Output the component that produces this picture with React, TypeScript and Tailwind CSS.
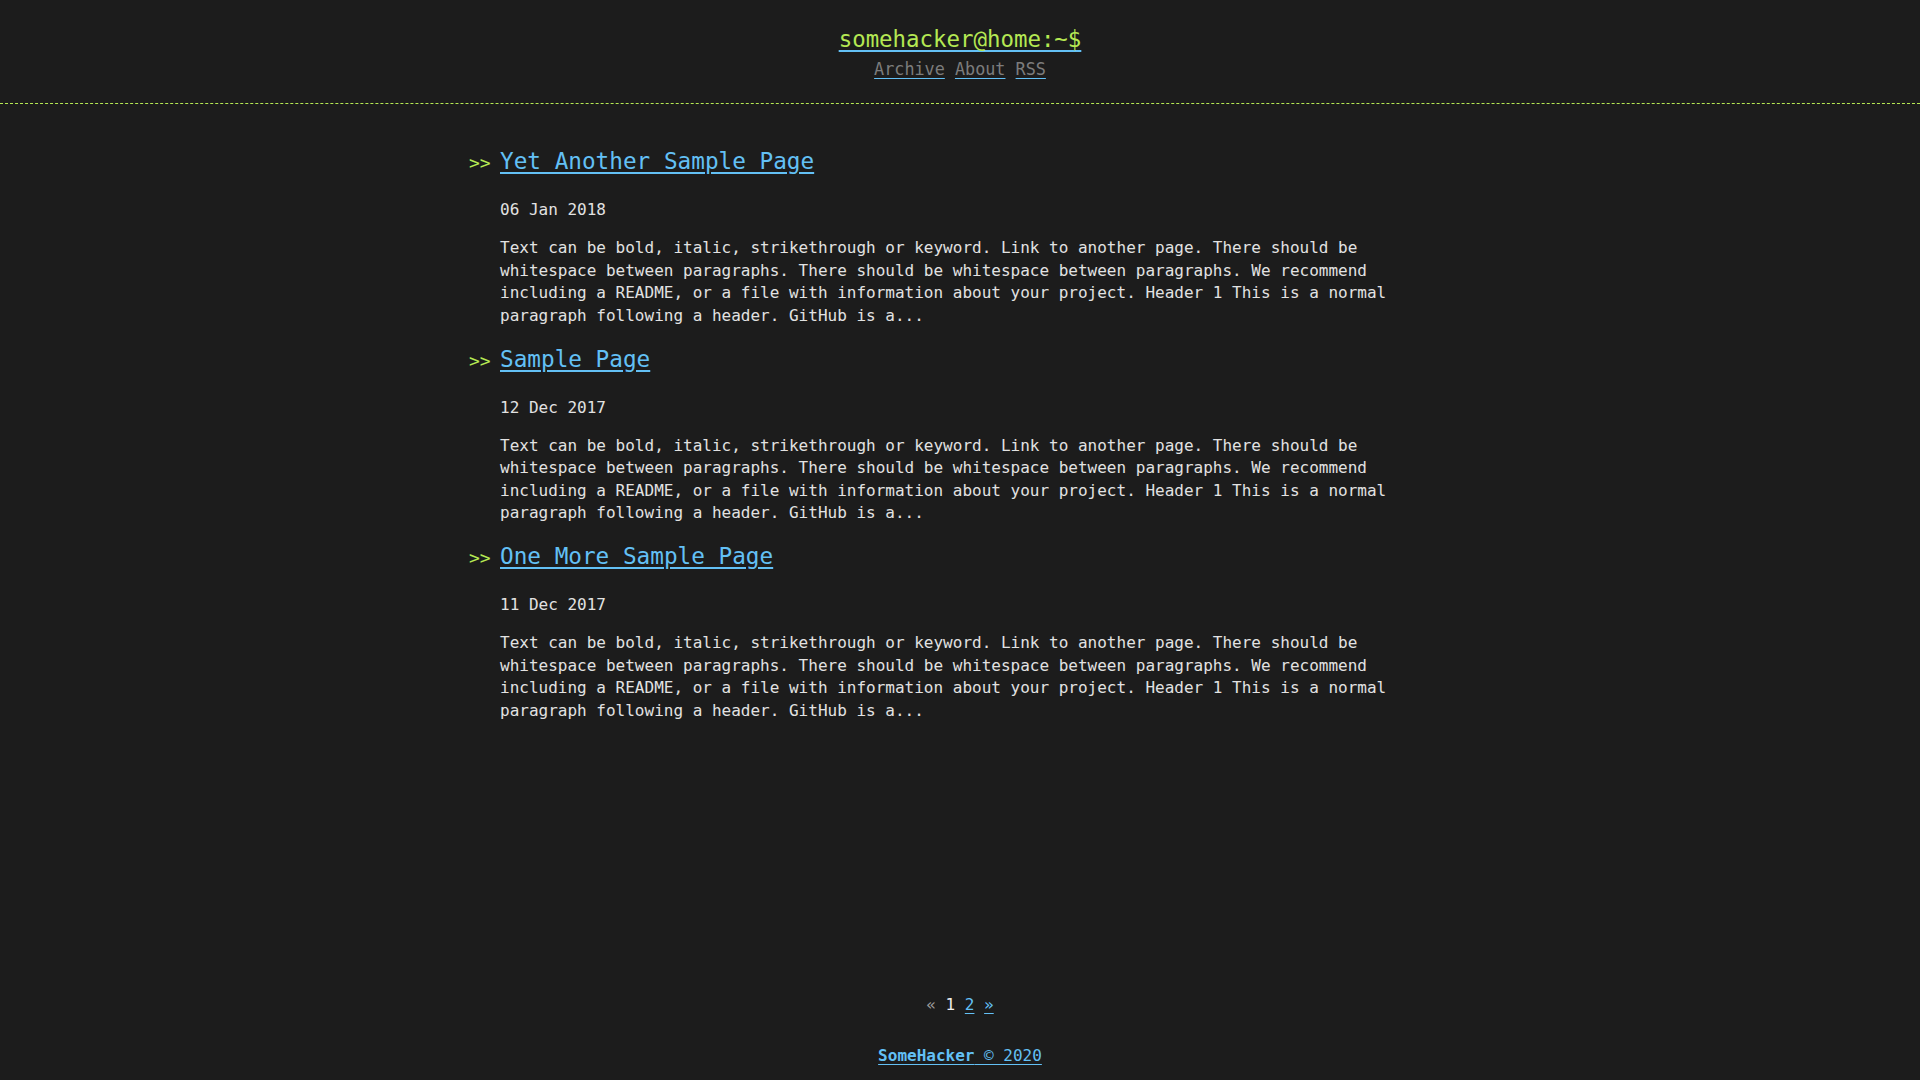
import React from "react";

const posts = [
  { title: "Yet Another Sample Page", date: "06 Jan 2018" },
  { title: "Sample Page", date: "12 Dec 2017" },
  { title: "One More Sample Page", date: "11 Dec 2017" },
];

const excerpt =
  "Text can be bold, italic, strikethrough or keyword. Link to another page. There should be whitespace between paragraphs. There should be whitespace between paragraphs. We recommend including a README, or a file with information about your project. Header 1 This is a normal paragraph following a header. GitHub is a...";

export default function App() {
  return (
    <div className="min-h-screen flex flex-col bg-[#1c1c1c] text-[#e2e2e2] font-['DejaVu_Sans_Mono','Liberation_Mono',monospace] text-[16px] leading-[22.4px]">
      <header className="pt-[24px] pb-[22px] text-center border-b border-dashed border-[#b5e853]">
        <h1 className="text-[22.4px] leading-[30px]">
          <a href="#" className="text-[#b5e853] underline decoration-[#63c0f5] underline-offset-[3px]">
            somehacker@home:~$
          </a>
        </h1>
        <nav className="mt-[3px] text-[16.8px] leading-[24px] text-[#7c7c7c]">
          <a href="#" className="underline decoration-[#63c0f5] underline-offset-[3px]">Archive</a>{" "}
          <a href="#" className="underline decoration-[#63c0f5] underline-offset-[3px]">About</a>{" "}
          <a href="#" className="underline decoration-[#63c0f5] underline-offset-[3px]">RSS</a>
        </nav>
      </header>

      <main className="flex-1 w-[920px] mx-auto pt-[41px]">
        {posts.map((p, i) => (
          <article key={p.title} className={i === 0 ? "" : "mt-[15.5px]"}>
            <h2 className="flex items-baseline -ml-[31px] text-[22.7px] leading-[32px]">
              <span className="w-[31px] text-[18px] text-[#b5e853]">&gt;&gt;</span>
              <a href="#" className="text-[#63c0f5] underline underline-offset-[3px]">
                {p.title}
              </a>
            </h2>
            <div className="mt-[20px]">{p.date}</div>
            <p className="mt-[16px]">{excerpt}</p>
          </article>
        ))}
      </main>

      <div className="text-center">
        <span className="text-[#9a9a9a]">«</span> <span className="text-[#eeeeee]">1</span>{" "}
        <a href="#" className="text-[#63c0f5] underline underline-offset-[3px]">2</a>{" "}
        <a href="#" className="text-[#63c0f5] underline underline-offset-[3px]">»</a>
      </div>

      <footer className="mt-[28px] pb-[13px] text-center">
        <a href="#" className="text-[#63c0f5] underline underline-offset-[3px]">
          <strong className="font-bold">SomeHacker</strong> © 2020
        </a>
      </footer>
    </div>
  );
}
